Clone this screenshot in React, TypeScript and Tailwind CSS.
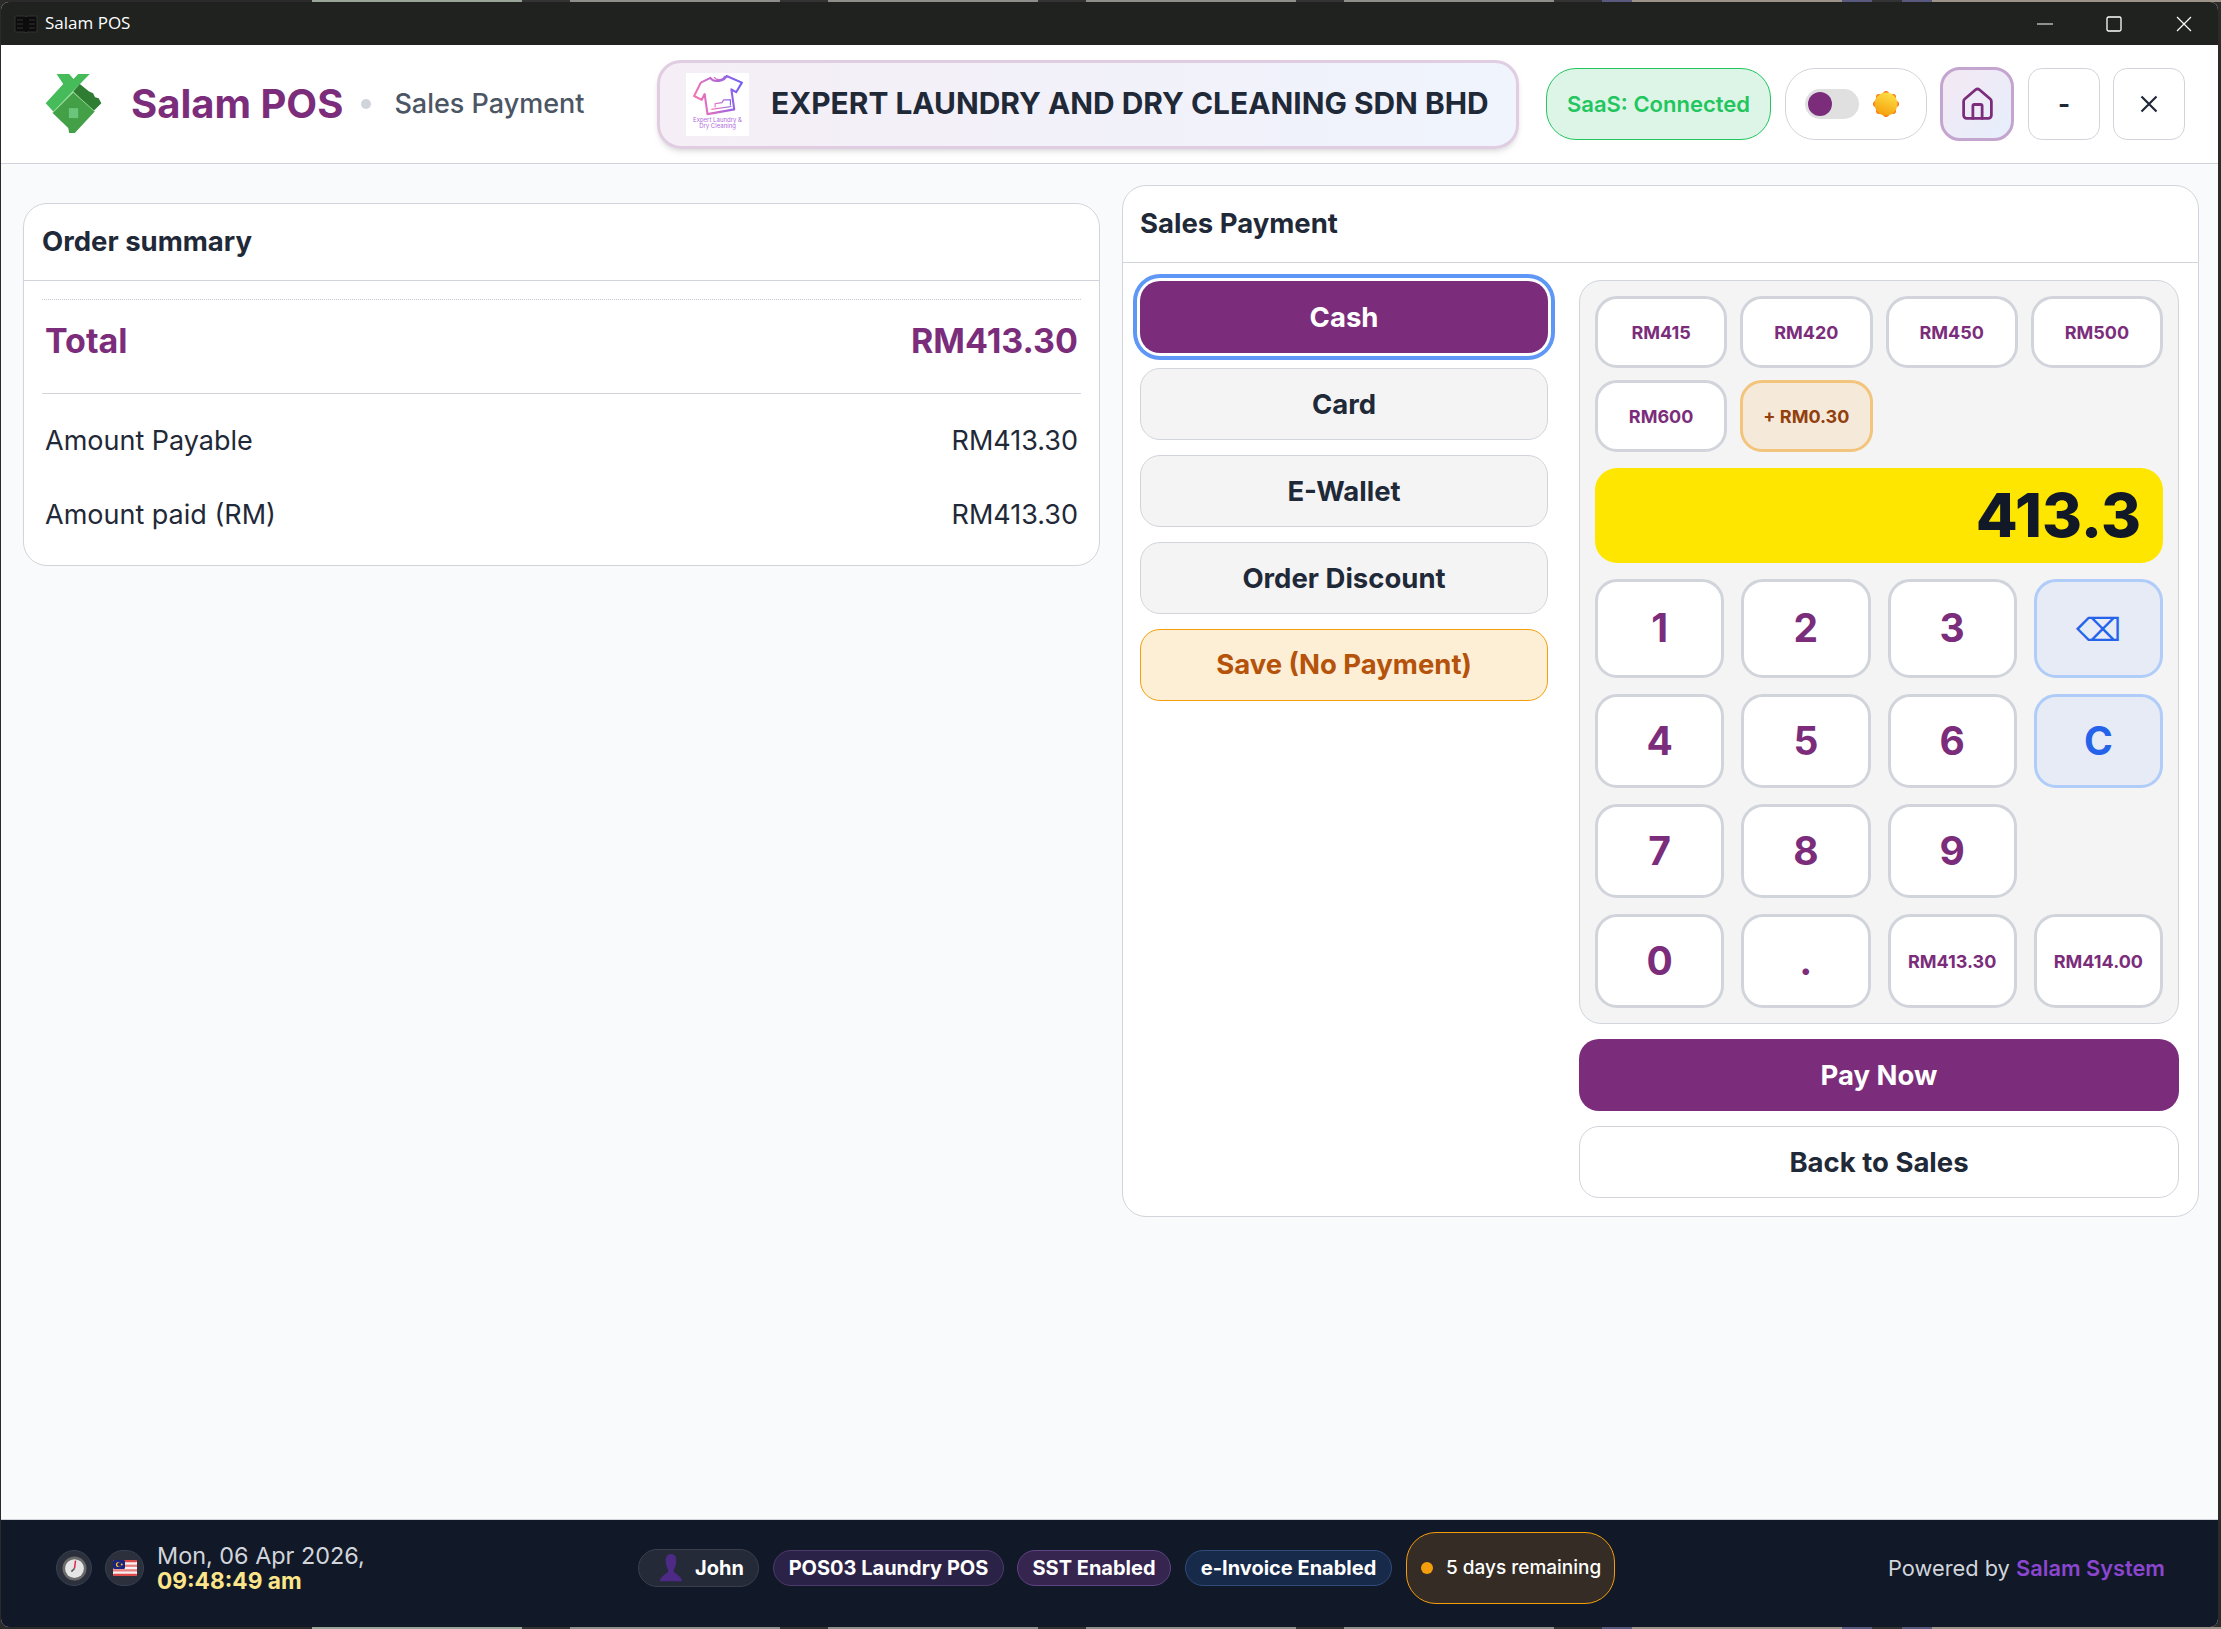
import { Home } from "lucide-react";

const topStrip = [
  "w-[312px] bg-[#2b2b2b]", "w-[210px] bg-[#9aa59a]", "w-[48px] bg-[#333333]", "w-[210px] bg-[#8e8e8a]",
  "w-[48px] bg-[#333333]", "w-[210px] bg-[#8e8e8a]", "w-[48px] bg-[#333333]", "w-[210px] bg-[#8e8e8a]",
  "w-[48px] bg-[#333333]", "w-[210px] bg-[#8e8e8a]", "w-[48px] bg-[#333333]", "w-[30px] bg-[#59597f]",
  "w-[210px] bg-[#9c9488]", "w-[30px] bg-[#59597f]", "w-[30px] bg-[#333333]", "w-[30px] bg-[#59597f]", "flex-1 bg-[#9c9488]",
];

const quickAmounts = ["RM415", "RM420", "RM450", "RM500", "RM600"];
const methods = ["Card", "E-Wallet", "Order Discount"];

const keyClass = "flex items-center justify-center rounded-[22px] border-[3px] border-[#d1d5db] bg-white font-bold text-[#7b2d7b]";

function Logo() {
  return (
    <svg viewBox="45 40 175 185" className="h-[62px] w-[58px] shrink-0">
      <polygon points="80,42 118,42 131,57 145,42 180,42 70,155 47,130 100,72" fill="#46bb5a" />
      <polygon points="150,72 178,95 190,100 196,112 207,115 215,130 190,155 130,95" fill="#2e7d32" />
      <polygon points="130,97 195,155 135,220 118,220 115,205 68,160" fill="#43a047" />
      <polyline points="68,158 130,97 195,155" fill="none" stroke="#8fdc8f" strokeWidth="3" />
      <rect x="117" y="145" width="28" height="30" fill="#6cc57b" />
    </svg>
  );
}

function ShopLogo() {
  return (
    <div className="flex h-[63px] w-[63px] shrink-0 flex-col items-center bg-white pt-[2px]">
      <svg viewBox="0 0 54 44" className="h-[42px] w-[52px]">
        <defs>
          <linearGradient id="shirt" x1="0" y1="0.3" x2="1" y2="0.1">
            <stop offset="0" stopColor="#f472b6" />
            <stop offset="1" stopColor="#6d5ef6" />
          </linearGradient>
        </defs>
        <path
          d="M19 3 L9 8 L2 22 L10 26 L13 20 L16 41 L44 36 L41 15 L46 18 L52 8 L36 1 C34 7 22 8 19 3 Z"
          fill="none"
          stroke="url(#shirt)"
          strokeWidth="2.2"
          strokeLinejoin="round"
        />
        <path d="M23 2 C25 6 32 6 34 1 M20 36 L41 33 M24 34 L24 30 L31 29 L33 26 L40 26 L40 32" fill="none" stroke="url(#shirt)" strokeWidth="1.2" />
      </svg>
      <div className="text-center font-['Inter',sans-serif] text-[6px] leading-[6.5px] text-[#b06be0]">
        Expert Laundry &amp;
        <br />
        Dry Cleaning
      </div>
    </div>
  );
}

function Sun() {
  return (
    <svg viewBox="0 0 28 28" className="h-[28px] w-[28px]">
      <defs>
        <linearGradient id="sun" x1="0.7" y1="0" x2="0.3" y2="1">
          <stop offset="0" stopColor="#fde047" />
          <stop offset="1" stopColor="#f59e0b" />
        </linearGradient>
      </defs>
      <g fill="#f97316">
        <circle cx="14" cy="4" r="3" />
        <circle cx="14" cy="24" r="3" />
        <circle cx="4" cy="14" r="3" />
        <circle cx="24" cy="14" r="3" />
        <circle cx="7" cy="7" r="3" />
        <circle cx="21" cy="7" r="3" />
        <circle cx="7" cy="21" r="3" />
        <circle cx="21" cy="21" r="3" />
      </g>
      <circle cx="14" cy="14" r="11.5" fill="url(#sun)" />
    </svg>
  );
}

function ClockIcon() {
  return (
    <svg viewBox="0 0 24 24" className="h-[25px] w-[25px]">
      <circle cx="12" cy="12" r="11.5" fill="#6b6b6b" />
      <circle cx="12" cy="12" r="9" fill="#e5e5e5" />
      <line x1="12" y1="12" x2="13" y2="4.5" stroke="#e11d48" strokeWidth="1.4" />
      <line x1="12" y1="12" x2="9" y2="15" stroke="#555555" strokeWidth="1.4" />
    </svg>
  );
}

function FlagIcon() {
  return (
    <svg viewBox="0 0 24 16" className="h-[16px] w-[24px]">
      <rect width="24" height="16" rx="2" fill="#f8f1f1" />
      <rect y="0" width="24" height="2.3" rx="1" fill="#dc4a4a" />
      <rect y="4.6" width="24" height="2.3" fill="#e88080" />
      <rect y="9.2" width="24" height="2.3" fill="#e88080" />
      <rect y="13.7" width="24" height="2.3" rx="1" fill="#dc4a4a" />
      <rect width="12" height="9" rx="1.5" fill="#1a237e" />
      <circle cx="5.5" cy="4.5" r="2.6" fill="#fbbf24" />
      <circle cx="6.5" cy="4.5" r="2.2" fill="#1a237e" />
      <circle cx="8.7" cy="4.5" r="1" fill="#fbbf24" />
    </svg>
  );
}

function UserIcon() {
  return (
    <svg viewBox="0 0 24 32" className="h-[30px] w-[24px]">
      <path d="M12 1 C17 1 18 5 17.5 10 C17 15 15 17 15 19 C15 22 22 23 24 30 L0 30 C2 23 9 22 9 19 C9 17 7 15 6.5 10 C6 5 7 1 12 1 Z" fill="#4c2a85" />
    </svg>
  );
}

export default function App() {
  return (
    <div className="flex h-[1629px] w-full flex-col overflow-hidden bg-[#2b2b2b] font-['Inter',sans-serif]">
      <div className="flex h-[2px] shrink-0">
        {topStrip.map((c, i) => (
          <div key={i} className={c}></div>
        ))}
      </div>

      <div className="ml-[1px] mr-[3px] flex min-h-0 flex-1 flex-col overflow-hidden rounded-[8px] bg-[#f9fafb]">
        {/* Window title bar */}
        <div className="relative flex h-[43px] shrink-0 items-center bg-[#20221f] pl-[13px] font-['Open_Sans',sans-serif] text-[17px] text-white">
          <svg viewBox="0 0 24 20" className="h-[20px] w-[24px] text-black">
            <path d="M1 2h10l1 1 1-1h10v16H13l-1 1-1-1H1z" fill="#0c0c0c" stroke="#333333" strokeWidth="1" />
            <path d="M3 6h6M3 10h6M3 14h6M15 6h6M15 10h6M15 14h6" stroke="#333333" strokeWidth="1" />
          </svg>
          <span className="ml-[7px] pb-[2px]">Salam POS</span>
          <div className="ml-auto flex items-center pr-[26px]">
            <svg viewBox="0 0 16 16" className="h-[16px] w-[16px]">
              <line x1="0" y1="8" x2="16" y2="8" stroke="#ffffff" strokeWidth="1.2" />
            </svg>
            <svg viewBox="0 0 16 16" className="ml-[53px] h-[16px] w-[16px]">
              <rect x="1" y="1" width="14" height="14" rx="1.5" fill="none" stroke="#ffffff" strokeWidth="1.3" />
            </svg>
            <svg viewBox="0 0 16 16" className="ml-[54px] h-[16px] w-[16px]">
              <path d="M1 1 L15 15 M15 1 L1 15" stroke="#ffffff" strokeWidth="1.2" />
            </svg>
          </div>
        </div>

        {/* App header */}
        <div className="flex h-[119px] shrink-0 items-center border-b border-[#d1d5db] bg-white pl-[44px]">
          <div className="flex w-[612px] items-center">
            <Logo />
            <span className="ml-[28px] text-[40px] font-bold text-[#7b2d7b]">Salam POS</span>
            <span className="ml-[18px] h-[10px] w-[10px] rounded-full bg-[#d1d5db]"></span>
            <span className="ml-[23px] text-[27px] font-medium text-[#4b5563]">Sales Payment</span>
          </div>
          <div className="flex h-[89px] w-[862px] items-center gap-[22px] rounded-[24px] border-[3px] border-[#e0cde2] bg-gradient-to-r from-[#f5eef6] to-[#eff4fd] pl-[26px] shadow-md">
            <ShopLogo />
            <span className="pb-[2px] text-[29.9px] font-bold text-[#1f2937]">EXPERT LAUNDRY AND DRY CLEANING SDN BHD</span>
          </div>
          <div className="ml-[27px] flex h-[72px] w-[225px] items-center justify-center rounded-[30px] border-[1.5px] border-[#22c55e] bg-[#dcf5e6] text-[22px] font-semibold text-[#22c55e]">
            SaaS: Connected
          </div>
          <div className="ml-[14px] flex h-[72px] w-[142px] items-center rounded-[30px] border border-[#d1d5db] bg-white pl-[19px]">
            <div className="flex h-[30px] w-[54px] items-center rounded-full bg-[#e0e0e0] pl-[3px]">
              <div className="h-[24px] w-[24px] rounded-full bg-[#7b2d7b]"></div>
            </div>
            <div className="ml-[13px]">
              <Sun />
            </div>
          </div>
          <div className="ml-[13px] flex h-[74px] w-[74px] items-center justify-center rounded-[20px] border-[3px] border-[#c4a5cf] bg-gradient-to-br from-[#f3e8f3] to-[#e6effc]">
            <Home size={37} strokeWidth={1.8} className="text-[#7b2d7b]" />
          </div>
          <div className="ml-[14px] flex h-[72px] w-[72px] items-center justify-center rounded-[14px] border border-[#d1d5db] bg-white pb-[2px] text-[26px] font-bold text-[#1f2937]">
            -
          </div>
          <div className="ml-[13px] flex h-[72px] w-[72px] items-center justify-center rounded-[14px] border border-[#d1d5db] bg-white">
            <svg viewBox="0 0 18 18" className="h-[18px] w-[18px]">
              <path d="M1.5 1.5 L16.5 16.5 M16.5 1.5 L1.5 16.5" stroke="#1f2937" strokeWidth="2.2" />
            </svg>
          </div>
        </div>

        {/* Content */}
        <div className="grid min-h-0 flex-1 grid-cols-2 items-start gap-[22px] pl-[22px] pr-[19px] pt-[21px]">
          <div className="mt-[18px] rounded-[24px] border border-[#d1d5db] bg-white">
            <div className="flex h-[77px] items-center border-b border-[#d1d5db] px-[18px] text-[27.5px] font-bold text-[#1f2937]">Order summary</div>
            <div className="px-[18px] pb-[13px] pt-[18px]">
              <div className="border-t border-dotted border-[#c4c8d0]">
                <div className="flex h-[94px] items-center justify-between border-b border-[#d1d5db] px-[3px] pb-[13px] text-[34px] font-bold text-[#7b2d7b]">
                  <span>Total</span>
                  <span>RM413.30</span>
                </div>
              </div>
              <div className="pt-[10px] text-[27px] text-[#1f2937]">
                <div className="flex h-[74px] items-center justify-between px-[3px]">
                  <span>Amount Payable</span>
                  <span>RM413.30</span>
                </div>
                <div className="flex h-[74px] items-center justify-between px-[3px]">
                  <span>Amount paid (RM)</span>
                  <span>RM413.30</span>
                </div>
              </div>
            </div>
          </div>

          <div className="rounded-[24px] border border-[#d1d5db] bg-white">
            <div className="flex h-[77px] items-center border-b border-[#d1d5db] px-[17px] text-[27.5px] font-bold text-[#1f2937]">Sales Payment</div>
            <div className="flex gap-[31px] pb-[18px] pl-[17px] pr-[19px] pt-[17px]">
              <div className="mt-[1px] flex w-[408px] shrink-0 flex-col gap-[15px] text-[27.5px] font-bold">
                <button className="h-[72px] rounded-[20px] bg-[#7b2d7b] pt-[1px] text-white ring-4 ring-[#5e97f6] ring-offset-[3px] ring-offset-white">Cash</button>
                {methods.map((m) => (
                  <button key={m} className="h-[72px] rounded-[20px] border border-[#d1d5db] bg-[#f4f4f5] pt-[1px] text-[#1f2937]">
                    {m}
                  </button>
                ))}
                <button className="h-[72px] rounded-[20px] border border-[#f59e0b] bg-[#fdeed6] text-[#b45309]">Save (No Payment)</button>
              </div>

              <div className="flex min-w-0 flex-1 flex-col gap-[15px]">
                <div className="rounded-[22px] border border-[#d1d5db] bg-[#f4f4f5] p-[15px]">
                  <div className="grid grid-cols-4 gap-x-[13px] gap-y-[12px]">
                    {quickAmounts.map((a) => (
                      <button key={a} className="h-[72px] rounded-[22px] border-[3px] border-[#d1d5db] bg-white text-[18px] font-bold text-[#7b2d7b]">
                        {a}
                      </button>
                    ))}
                    <button className="h-[72px] rounded-[22px] border-[3px] border-[#f3c47c] bg-[#f5e9da] text-[18px] font-bold text-[#92400e]">+ RM0.30</button>
                  </div>
                  <div className="mt-[16px] flex h-[95px] items-center justify-end rounded-[22px] bg-[#ffe600] pr-[22px] text-[61px] font-extrabold text-[#111827]">413.3</div>
                  <div className="mt-[16px] grid grid-cols-4 grid-rows-[99px_94px_94px_94px] gap-x-[17px] gap-y-[16px] text-[39px]">
                    <button className={keyClass}>1</button>
                    <button className={keyClass}>2</button>
                    <button className={keyClass}>3</button>
                    <button className="flex items-center justify-center rounded-[22px] border-[3px] border-[#b0ccf8] bg-[#e6ebf5] pt-[2px] font-['DejaVu_Sans',sans-serif] text-[32px] text-[#2563eb]">⌫</button>
                    <button className={keyClass}>4</button>
                    <button className={keyClass}>5</button>
                    <button className={keyClass}>6</button>
                    <button className="flex items-center justify-center rounded-[22px] border-[3px] border-[#b0ccf8] bg-[#e6ebf5] font-bold text-[#2563eb]">C</button>
                    <button className={keyClass}>7</button>
                    <button className={keyClass}>8</button>
                    <button className={keyClass}>9</button>
                    <div></div>
                    <button className={keyClass}>0</button>
                    <button className={keyClass}>.</button>
                    <button className={`${keyClass} text-[18px]`}>RM413.30</button>
                    <button className={`${keyClass} text-[18px]`}>RM414.00</button>
                  </div>
                </div>
                <button className="h-[72px] rounded-[20px] bg-[#7b2d7b] pt-[1px] text-[27.5px] font-bold text-white">Pay Now</button>
                <button className="h-[72px] rounded-[20px] border border-[#d1d5db] bg-white pt-[2px] text-[27.5px] font-bold text-[#1f2937]">Back to Sales</button>
              </div>
            </div>
          </div>
        </div>

        {/* Status bar */}
        <div className="flex h-[108px] shrink-0 items-center border-t border-[#d1d5db] bg-[#111827] pb-[11px] pl-[55px] pr-[53px]">
          <div className="flex w-[582px] items-center">
            <div className="flex h-[36px] w-[36px] items-center justify-center rounded-full border border-[#374151] bg-[#2b303c]">
              <ClockIcon />
            </div>
            <div className="ml-[13px] flex h-[36px] w-[39px] items-center justify-center rounded-full border border-[#374151] bg-[#2b303c]">
              <FlagIcon />
            </div>
            <div className="ml-[13px] text-[23.4px] leading-[25px] text-[#d1d5db]">
              <div>Mon, 06 Apr 2026,</div>
              <div className="text-[22.7px] font-bold text-[#fde68a]">09:48:49 am</div>
            </div>
          </div>
          <div className="flex h-[38px] w-[121px] items-center rounded-full border border-[#3a3f4c] bg-[#252a38] pl-[20px] text-[20px] font-bold text-white">
            <UserIcon />
            <span className="ml-[12px]">John</span>
          </div>
          <div className="ml-[14px] flex h-[36px] w-[231px] items-center justify-center rounded-full border border-[#4c3b6c] bg-[#2b2347] text-[20px] font-bold text-white">POS03 Laundry POS</div>
          <div className="ml-[13px] flex h-[36px] w-[154px] items-center justify-center rounded-full border border-[#5e4583] bg-[#35254f] text-[20px] font-bold text-white">SST Enabled</div>
          <div className="ml-[14px] flex h-[36px] w-[207px] items-center justify-center rounded-full border border-[#2e4d7c] bg-[#172a4a] text-[20px] font-bold text-white">e-Invoice Enabled</div>
          <div className="ml-[14px] flex h-[72px] w-[209px] items-center rounded-[30px] border border-[#f59e0b] bg-[#352c26] pl-[14px] text-[19px] font-medium text-white">
            <span className="h-[12px] w-[12px] rounded-full bg-[#f59e0b]"></span>
            <span className="ml-[13px]">5 days remaining</span>
          </div>
          <div className="ml-auto text-[21.8px] text-[#d1d5db]">
            Powered by <span className="font-semibold text-[#8b46cf]">Salam System</span>
          </div>
        </div>
      </div>

      <div className="flex h-[2px] shrink-0">
        {topStrip.map((c, i) => (
          <div key={i} className={c}></div>
        ))}
      </div>
    </div>
  );
}
